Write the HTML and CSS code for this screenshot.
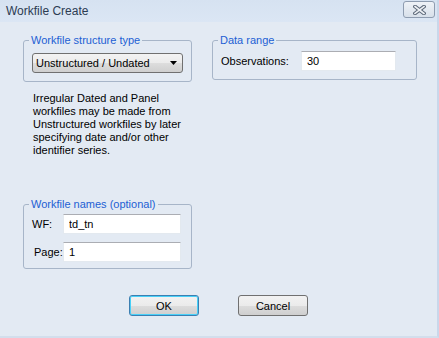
FILE: index.html
```html
<!DOCTYPE html>
<html lang="en">
<head>
    <meta charset="UTF-8">
    <title>Workfile Create</title>
    <link rel="stylesheet" href="styles.css">
</head>
<body>
    <div class="window">
        <div class="titlebar">
            <span class="title">Workfile Create</span>
            <button class="close-btn" type="button">
                <svg width="13" height="10" viewBox="0 0 13 10">
                    <path d="M2 1.5 L11 8.5 M11 1.5 L2 8.5" stroke="#5a6677" stroke-width="3.6" stroke-linecap="square" fill="none"/>
                    <path d="M2 1.5 L11 8.5 M11 1.5 L2 8.5" stroke="#eef1f5" stroke-width="1.6" stroke-linecap="square" fill="none"/>
                </svg>
            </button>
        </div>

        <div class="client">
            <div class="columns">
                <div class="col-left">
                    <fieldset class="group group-structure">
                        <legend>Workfile structure type</legend>
                        <div class="combo">
                            <span>Unstructured / Undated</span>
                            <svg width="7" height="4" viewBox="0 0 7 4"><path d="M0 0 H7 L3.5 4 Z" fill="#000"/></svg>
                        </div>
                    </fieldset>

                    <p class="note">Irregular Dated and Panel<br>workfiles may be made from<br>Unstructured workfiles by later<br>specifying date and/or other<br>identifier series.</p>

                    <fieldset class="group group-names">
                        <legend>Workfile names (optional)</legend>
                        <div class="names-grid">
                            <label class="lbl-wf">WF:</label>
                            <input class="textbox" type="text" value="td_tn">
                            <label class="lbl-page">Page:</label>
                            <input class="textbox" type="text" value="1">
                        </div>
                    </fieldset>
                </div>

                <div class="col-right">
                    <fieldset class="group group-range">
                        <legend>Data range</legend>
                        <div class="range-row">
                            <label class="lbl-obs">Observations:</label>
                            <input class="textbox obs-box" type="text" value="30">
                        </div>
                    </fieldset>
                </div>
            </div>

            <div class="buttons">
                <button class="btn btn-default" type="button">OK</button>
                <button class="btn" type="button">Cancel</button>
            </div>
        </div>
    </div>
</body>
</html>
```

FILE: styles.css
```css
body {
    margin: 0;
    background-color: #e3eaf3;
    font-family: 'Liberation Sans', Arial, sans-serif;
    font-size: 11px;
    color: black;
}

.window {
    width: 439px;
    height: 338px;
    box-sizing: border-box;
    border-right: 2px solid #c9d7ea;
    border-bottom: 2px solid #d3deec;
    background-color: #e3eaf3;
    display: flex;
    flex-direction: column;
}

.titlebar {
    height: 22px;
    display: flex;
    align-items: center;
    justify-content: space-between;
    padding: 0 2px 0 6px;
    background: linear-gradient(#d6e2f1, #dbe6f4);
}

.title {
    font-size: 12px;
    color: #2c3b52;
}

.close-btn {
    width: 32px;
    height: 17px;
    margin-top: -3px;
    padding: 0;
    border: 1px solid #8e9cb0;
    border-radius: 3px;
    background: linear-gradient(#eef2f7, #d8e0ea);
    display: flex;
    align-items: center;
    justify-content: center;
}

.client {
    flex: 1;
    padding: 11px 0 0 23px;
}

.columns {
    display: flex;
    gap: 20px;
}

.col-left {
    width: 169px;
}

.col-right {
    width: 205px;
}

.group {
    margin: 0;
    padding: 0 8px;
    border: 1px solid #a7b5c8;
    border-radius: 3px;
    box-sizing: border-box;
}

.group legend {
    margin-left: -3px;
    padding: 0 2px;
    line-height: 14px;
    color: #1d5fd3;
}

.group-structure {
    padding-top: 6px;
    padding-bottom: 8px;
}

.combo {
    height: 20px;
    box-sizing: border-box;
    display: flex;
    align-items: center;
    justify-content: space-between;
    padding: 0 5px 0 3px;
    border: 1px solid #707070;
    border-radius: 3px;
    background: linear-gradient(#f3f3f3 0%, #ebebeb 50%, #dddddd 51%, #cfcfcf 100%);
}

.note {
    margin: 10px 0 0 0;
    padding-left: 10px;
    line-height: 13px;
    white-space: nowrap;
}

.group-names {
    margin-top: 40px;
    padding-top: 3px;
    padding-bottom: 6px;
}

.names-grid {
    display: grid;
    grid-template-columns: 31px 118px;
    row-gap: 8px;
    align-items: center;
}

.lbl-page {
    padding-left: 2px;
}

.textbox {
    height: 20px;
    box-sizing: border-box;
    margin: 0;
    padding: 0 5px;
    border: 1px solid #e3e9ef;
    border-top-color: #abadb3;
    background-color: white;
    font-family: inherit;
    font-size: 11px;
    color: black;
    outline: none;
}

.group-range {
    padding-top: 4px;
    padding-bottom: 8px;
}

.range-row {
    display: flex;
    align-items: center;
}

.lbl-obs {
    width: 80px;
}

.obs-box {
    width: 95px;
}

.buttons {
    display: flex;
    justify-content: center;
    gap: 39px;
    margin-top: 26px;
    padding-right: 23px;
}

.btn {
    width: 70px;
    height: 21px;
    padding: 0;
    border: 1px solid #707070;
    border-radius: 3px;
    background: linear-gradient(#f2f2f2 0%, #ebebeb 50%, #dddddd 51%, #cfcfcf 100%);
    font-family: inherit;
    font-size: 11px;
    color: black;
}

.btn-default {
    border-color: #3c7fb1;
    box-shadow: inset 0 0 0 1px #48d0f8;
}
```
